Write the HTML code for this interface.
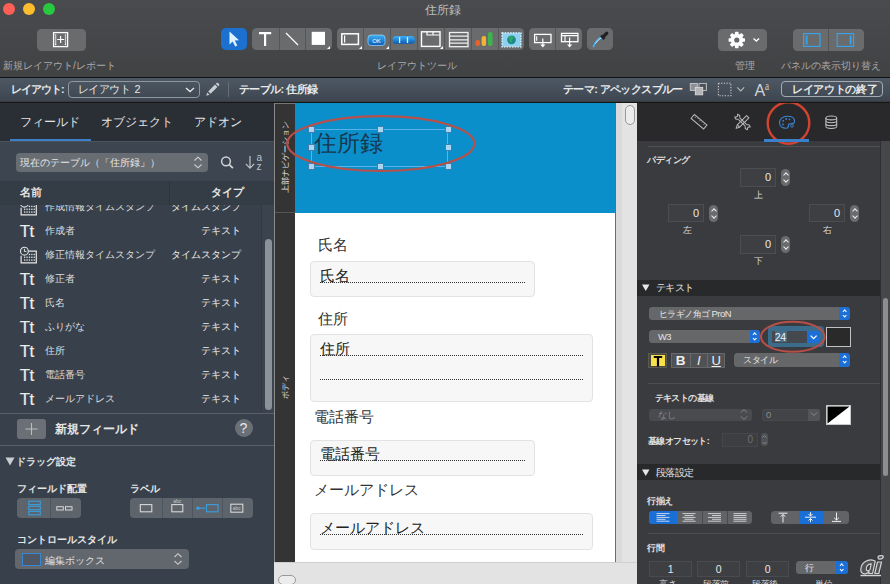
<!DOCTYPE html>
<html><head><meta charset="utf-8">
<style>
*{margin:0;padding:0;box-sizing:border-box}
html,body{width:890px;height:584px;overflow:hidden;background:#3a3b3d;font-family:"Liberation Sans",sans-serif;}
.a{position:absolute}
svg{overflow:visible}
#tb{left:0;top:0;width:890px;height:77px;background:linear-gradient(#494b4e,#404244)}
.title{left:-1.6px;width:890px;top:2px;text-align:center;color:#bdbdbd;font-size:12px}
.tl{width:12px;height:12px;border-radius:50%;top:3px}
.btn{background:#6a6b6d;border-radius:4.5px}
.lbl{color:#a9a9a9;font-size:10px;white-space:nowrap;line-height:12px}
.seg{border-left:1px solid #555658;width:0}
#lbar{left:0;top:78.3px;width:890px;height:23.2px;background:linear-gradient(#4e5864,#3d4650)}
.wt{color:#e8e8e8;font-size:10.8px;font-weight:bold;white-space:nowrap;line-height:13px}
.tab{color:#e4e4e4;font-size:11.8px;white-space:nowrap;line-height:14px}
.lt{white-space:nowrap;line-height:13px}
.lb{color:#e6e6e6;font-size:10.5px;font-weight:bold;white-space:nowrap;line-height:12px}
.row{left:0;width:260px;height:24px}
.tt{left:19.8px;top:3.8px;font-size:16.8px;font-weight:normal;color:#ececec;line-height:18px;letter-spacing:-0.6px;-webkit-text-stroke:.2px #ececec}
.nm{left:44.5px;top:6px;font-size:10px;color:#dedede;white-space:nowrap;line-height:12px}
.ty{right:19px;top:6px;font-size:10px;color:#ececec;white-space:nowrap;line-height:12px}
.grp{background:#5e646b;border-radius:4px}
.h{width:7px;height:7px;background:#a9d6f3;border:1px solid #3f7fae}
.fl{font-size:15.2px;line-height:18px;color:#333;white-space:nowrap}
.ft{font-size:15.2px;line-height:18px;color:#222;white-space:nowrap}
.fb{background:#f7f7f7;border:1px solid #e2e2e2;border-radius:4px}
.dl{height:1px;border-top:1px dotted #333}
.vl{height:12px;font-size:8.4px;line-height:12px;color:#e4e4e4;text-align:center;white-space:nowrap;transform:rotate(-90deg)}
.rb{color:#e2e2e2;font-size:8.8px;letter-spacing:-0.6px;font-weight:bold;white-space:nowrap;line-height:11px}
.rs{color:#d8d8d8;font-size:8.8px;letter-spacing:-0.3px;white-space:nowrap;line-height:11px}
.rt{color:#e6e6e6;font-size:9.4px;letter-spacing:-0.5px;white-space:nowrap;line-height:12px}
.inp{background:#3e3f42;border:1px solid #4c4d50;color:#e8e8e8;text-align:right;padding-right:4px;font-size:11px;line-height:17px}
.inp2{height:16px;background:#3e3f42;border:1px solid #4a4b4e;color:#e8e8e8;text-align:center;font-size:10.5px;line-height:14px}
.stp{width:9px;height:17px;background:#6a6b6d;border-radius:4.5px}
.stp::before{content:"";position:absolute;left:2.6px;top:4px;width:3px;height:3px;border-left:1px solid #eee;border-top:1px solid #eee;transform:rotate(45deg)}
.stp::after{content:"";position:absolute;left:2.6px;top:9px;width:3px;height:3px;border-right:1px solid #eee;border-bottom:1px solid #eee;transform:rotate(45deg)}
.sh{left:0;width:243px;background:#28292b;color:#e6e6e6;font-size:9.6px;letter-spacing:-0.4px;line-height:17px;white-space:nowrap;display:flex;align-items:center}
.dd{background:#666769;border-radius:3.5px}
.bl{background:#1b6fd6;border-radius:0 3.5px 3.5px 0}
.bl::before{content:"";position:absolute;left:3.7px;top:2.8px;width:2.4px;height:2.4px;border-left:1.1px solid #fff;border-top:1.1px solid #fff;transform:rotate(45deg)}
.bl::after{content:"";position:absolute;left:3.7px;top:6.8px;width:2.4px;height:2.4px;border-right:1.1px solid #fff;border-bottom:1.1px solid #fff;transform:rotate(45deg)}
</style></head><body>
<!-- toolbar -->
<div id="tb" class="a">
  <div class="a title">住所録</div>
  <div class="a tl" style="left:3px;background:#fe5f57"></div>
  <div class="a tl" style="left:23px;background:#febc2e"></div>
  <div class="a tl" style="left:43px;background:#28c840"></div>
  <div class="a btn" style="left:37px;top:29px;width:49px;height:22px"></div>
  <svg class="a" style="left:37px;top:29px" width="49" height="22" viewBox="0 0 49 22">
    <rect x="16.6" y="3.6" width="14" height="14" fill="none" stroke="#fff" stroke-width="1.3"/>
    <g fill="#fff"><circle cx="18.7" cy="5.9" r=".75"/><circle cx="18.7" cy="7.9" r=".75"/><circle cx="18.7" cy="9.9" r=".75"/><circle cx="18.7" cy="11.9" r=".75"/><circle cx="18.7" cy="13.9" r=".75"/><circle cx="18.7" cy="15.6" r=".75"/>
    <circle cx="28.5" cy="5.9" r=".75"/><circle cx="28.5" cy="7.9" r=".75"/><circle cx="28.5" cy="9.9" r=".75"/><circle cx="28.5" cy="11.9" r=".75"/><circle cx="28.5" cy="13.9" r=".75"/><circle cx="28.5" cy="15.6" r=".75"/></g>
    <path d="M20.2 10.5h7M23.6 7v7" stroke="#fff" stroke-width="1.2"/>
  </svg>
  <div class="a lbl" style="left:3px;top:60px">新規レイアウト/レポート</div>

  <div class="a" style="left:221px;top:28px;width:26px;height:22px;background:#1c70d0;border-radius:5px"></div>
  <svg class="a" style="left:221px;top:28px" width="26" height="22" viewBox="0 0 26 22">
    <path d="M8.5 3.4 L8.5 16.5 L11.6 13.6 L14.2 18.6 L16.3 17.6 L13.8 12.6 L18 12.3 Z" fill="#dff4ff"/>
  </svg>
  <div class="a btn" style="left:252px;top:28px;width:80px;height:22px"></div>
  <div class="a seg" style="left:279px;top:28px;height:22px"></div>
  <div class="a seg" style="left:305px;top:28px;height:22px"></div>
  <svg class="a" style="left:252px;top:28px" width="80" height="22" viewBox="0 0 80 22">
    <path d="M7 5.2h12.2M13.1 5.2v12.8" stroke="#fff" stroke-width="2.2" fill="none"/>
    <path d="M34 5 L46 17" stroke="#fff" stroke-width="1.3"/>
    <rect x="59.7" y="3.8" width="13.3" height="13.1" fill="#fff"/>
    <path d="M78 18 v3 h-3 z" fill="#fff"/>
  </svg>
  <div class="a btn" style="left:337px;top:28px;width:187px;height:22px"></div>
  <div class="a seg" style="left:363px;top:28px;height:22px"></div>
  <div class="a seg" style="left:390px;top:28px;height:22px"></div>
  <div class="a seg" style="left:417px;top:28px;height:22px"></div>
  <div class="a seg" style="left:444px;top:28px;height:22px"></div>
  <div class="a seg" style="left:471px;top:28px;height:22px"></div>
  <div class="a seg" style="left:498px;top:28px;height:22px"></div>
  <svg class="a" style="left:337px;top:28px" width="187" height="22" viewBox="0 0 187 22">
    <defs><linearGradient id="bg1" x1="0" y1="0" x2="0" y2="1"><stop offset="0" stop-color="#3db0f5"/><stop offset="1" stop-color="#0a5cb5"/></linearGradient></defs>
    <rect x="4.8" y="5.8" width="16.6" height="10.6" fill="none" stroke="#fff" stroke-width="1.5"/>
    <path d="M7.6 7.5v7" stroke="#fff" stroke-width="1.2"/>
    <path d="M25 18 v3 h-3 z" fill="#fff"/>
    <rect x="31" y="7" width="17" height="10.5" rx="3" fill="url(#bg1)" stroke="#9fd6ff" stroke-width=".7"/>
    <text x="39.5" y="14.6" font-size="6" fill="#fff" text-anchor="middle" font-family="Liberation Sans">OK</text>
    <path d="M52 18 v3 h-3 z" fill="#fff"/>
    <rect x="55.5" y="8" width="22.5" height="7.8" rx="3.9" fill="url(#bg1)"/>
    <path d="M62.6 9v6M70.5 9v6" stroke="#d8f0ff" stroke-width="1.3"/>
    <rect x="84.5" y="3.8" width="18.5" height="14.6" fill="none" stroke="#fff" stroke-width="1.4"/>
    <path d="M90 3.8v3.2h12.5M96 3.8v3.2" stroke="#fff" stroke-width="1.2" fill="none"/>
    <path d="M106 18 v3 h-3 z" fill="#fff"/>
    <rect x="112.5" y="4.5" width="18.5" height="14.2" fill="none" stroke="#f0f0f0" stroke-width="1.3"/>
    <path d="M112.5 8.2h18.5M112.5 11.8h18.5M112.5 15.2h18.5" stroke="#f0f0f0" stroke-width="1.2"/>
    <rect x="138.5" y="12" width="4.5" height="6" rx="2" fill="#e8622c"/>
    <rect x="144.6" y="8" width="4.5" height="10" rx="2" fill="#f2b233"/>
    <rect x="151" y="4" width="4.5" height="14" rx="2" fill="#3cb64a"/>
    <rect x="165" y="4.8" width="19" height="14" fill="#8fd0ee" stroke="#e6f6ff" stroke-width="1.2" stroke-dasharray="1.5 1.2"/>
    <circle cx="174.5" cy="11.8" r="4.4" fill="#1f8a8a"/>
    <path d="M172 9.5 q2 -1.5 3.5 0 q-0.5 2 -2.5 1.5 q0 2 2 3" stroke="#2fb060" stroke-width="1.5" fill="none"/>
  </svg>
  <div class="a btn" style="left:529px;top:28px;width:53px;height:22px"></div>
  <div class="a seg" style="left:555px;top:28px;height:22px"></div>
  <svg class="a" style="left:529px;top:28px" width="53" height="22" viewBox="0 0 53 22">
    <rect x="5.6" y="6.4" width="16.4" height="8.2" fill="none" stroke="#fff" stroke-width="1.3"/>
    <path d="M7.7 8.2v4.5" stroke="#fff" stroke-width="1.1"/>
    <path d="M13.8 10.5v7.2" stroke="#fff" stroke-width="1.2"/>
    <path d="M11.2 16.4h5.2l-2.6 3z" fill="#fff"/>
    <rect x="32.5" y="5.4" width="16.4" height="8.3" fill="none" stroke="#fff" stroke-width="1.3"/>
    <path d="M32.5 7.6h16.4M36 7.6v6" stroke="#fff" stroke-width="1.1"/>
    <path d="M40.6 9.5v8.2" stroke="#fff" stroke-width="1.2"/>
    <path d="M38 16.4h5.2l-2.6 3z" fill="#fff"/>
  </svg>
  <div class="a btn" style="left:587px;top:28px;width:26px;height:22px"></div>
  <svg class="a" style="left:587px;top:28px" width="26" height="22" viewBox="0 0 26 22">
    <path d="M6.5 18.5 Q9 12 15.5 8.3" stroke="#4ab2ea" stroke-width="1.8" fill="none" stroke-linecap="round"/>
    <path d="M8.5 15.5 Q11 11.5 15 9.5" stroke="#d0ecff" stroke-width=".8" fill="none"/>
    <path d="M14 7.5 L17.5 11" stroke="#222" stroke-width="2.6"/>
    <path d="M16.5 8.5 L19.8 5.2" stroke="#222" stroke-width="3.2" stroke-linecap="round"/>
  </svg>
  <div class="a lbl" style="left:377px;top:60px">レイアウトツール</div>

  <div class="a btn" style="left:718px;top:29px;width:49px;height:22px"></div>
  <svg class="a" style="left:718px;top:29px" width="49" height="22" viewBox="0 0 49 22">
    <g transform="translate(18.8 11)" fill="#fff">
      <circle r="6.2"/>
      <g id="teeth"><rect x="-1.8" y="-8.2" width="3.6" height="4" rx=".6"/></g>
      <use href="#teeth" transform="rotate(45)"/><use href="#teeth" transform="rotate(90)"/><use href="#teeth" transform="rotate(135)"/>
      <use href="#teeth" transform="rotate(180)"/><use href="#teeth" transform="rotate(225)"/><use href="#teeth" transform="rotate(270)"/><use href="#teeth" transform="rotate(315)"/>
      <circle r="2.6" fill="#676869"/>
    </g>
    <path d="M35.5 9.4 l2.8 2.6 l2.8 -2.6" stroke="#fff" stroke-width="1.4" fill="none"/>
  </svg>
  <div class="a btn" style="left:793px;top:29px;width:71px;height:22px"></div>
  <div class="a seg" style="left:828px;top:29px;height:22px;border-color:#545557"></div>
  <svg class="a" style="left:793px;top:29px" width="71" height="22" viewBox="0 0 71 22">
    <rect x="10.6" y="4.6" width="16.4" height="12.8" fill="none" stroke="#3aa3e6" stroke-width="1.2"/>
    <rect x="12.6" y="6.5" width="2" height="9" fill="#3aa3e6"/>
    <rect x="44.2" y="4.6" width="16.4" height="12.8" fill="none" stroke="#3aa3e6" stroke-width="1.2"/>
    <rect x="56.6" y="6.5" width="2" height="9" fill="#3aa3e6"/>
  </svg>
  <div class="a lbl" style="left:735px;top:60px">管理</div>
  <div class="a lbl" style="left:781px;top:60px">パネルの表示切り替え</div>
</div>
<div class="a" style="left:0;top:77px;width:890px;height:1.4px;background:#111214"></div>
<div id="lbar" class="a">
  <div class="a wt" style="left:11px;top:5px;letter-spacing:-1px">レイアウト:</div>
  <div class="a" style="left:68px;top:3px;width:132px;height:17px;border:1px solid #8f979f;border-radius:4px"></div>
  <div class="a wt" style="left:78px;top:5px;font-weight:normal;letter-spacing:-0.6px;word-spacing:2px">レイアウト 2</div>
  <svg class="a" style="left:185px;top:9px" width="10" height="6"><path d="M1 1l4 3.6 4-3.6" stroke="#e8e8e8" stroke-width="1.3" fill="none"/></svg>
  <svg class="a" style="left:204px;top:4px" width="16" height="16" viewBox="0 0 16 16">
    <path d="M2.3 13.7 l0.9 -3.3 l2.4 2.4 z M4.2 9.4 l6.8 -6.8 l2.4 2.4 l-6.8 6.8 z M11.8 1.8 l0.9 -0.9 q0.6 -0.5 1.2 0 l1.2 1.2 q0.5 0.6 0 1.2 l-0.9 0.9 z" fill="#c9ced3"/>
  </svg>
  <div class="a" style="left:228px;top:4px;width:1px;height:15px;background:#67707a"></div>
  <div class="a wt" style="left:238.5px;top:5px;letter-spacing:-0.5px">テーブル: 住所録</div>
  <div class="a wt" style="left:563px;top:5px;letter-spacing:-0.6px">テーマ: アペックスブルー</div>
  <svg class="a" style="left:685px;top:1px" width="90" height="20" viewBox="685 80 90 20">
    <rect x="690.3" y="84.4" width="7" height="7" fill="#8d9196" stroke="#c8c8c8" stroke-width=".9"/>
    <rect x="699" y="84.4" width="7.4" height="7" fill="#4d535a" stroke="#c8c8c8" stroke-width=".9"/>
    <rect x="695.3" y="88.4" width="7.4" height="7.4" fill="#b3b5b7" stroke="#d8d8d8" stroke-width=".9"/>
    <rect x="718.4" y="84.3" width="12.5" height="12.4" fill="none" stroke="#d0d0d0" stroke-width="1.1" stroke-dasharray="1.2 1.5"/>
    <path d="M737.2 88.4l3.5 3.5 3.5-3.5" stroke="#b8b8b8" stroke-width="1.1" fill="none"/>
    <text x="754.5" y="96.8" font-size="16" fill="#d0d3d6" font-family="Liberation Sans">A</text>
    <text x="765" y="90.8" font-size="11.5" fill="#d0d3d6" font-family="Liberation Serif" transform="translate(765 0) scale(.8 1) translate(-765 0)">a</text>
  </svg>
  <div class="a" style="left:781px;top:3px;width:102px;height:16px;border:1px solid #a5abb1;border-radius:4px"></div>
  <div class="a wt" style="left:792px;top:5px;letter-spacing:-0.35px">レイアウトの終了</div>
</div>
<div class="a" style="left:0;top:101.5px;width:890px;height:1.5px;background:#151618"></div>
<!-- left panel -->
<div class="a" style="left:0;top:103px;width:274px;height:481px;background:#38414b;overflow:hidden">
  <div class="a" style="left:0;top:0;width:274px;height:38px;background:#2a2f36"></div>
  <div class="a tab" style="left:20px;top:12px">フィールド</div>
  <div class="a tab" style="left:101px;top:12px">オブジェクト</div>
  <div class="a tab" style="left:194px;top:12px">アドオン</div>
  <div class="a" style="left:10px;top:36px;width:81px;height:2px;background:#3b80c9"></div>
  <div class="a" style="left:0;top:38px;width:274px;height:40px;background:#3c4550;border-top:1px solid #4b535c"></div>
  <div class="a" style="left:16px;top:49.5px;width:192px;height:19.5px;background:#686d73;border-radius:4px"></div>
  <div class="a lt" style="left:20px;top:53px;font-size:10px;color:#e6e6e6">現在のテーブル（「住所録」）</div>
  <svg class="a" style="left:193px;top:53px" width="10" height="13" viewBox="0 0 10 13"><path d="M1.5 4.5l3.5-3.3 3.5 3.3M1.5 8.5l3.5 3.3 3.5-3.3" stroke="#cfd2d5" stroke-width="1.1" fill="none"/></svg>
  <svg class="a" style="left:220px;top:52px" width="15" height="15" viewBox="0 0 15 15"><circle cx="6" cy="6.3" r="4.4" stroke="#d0d3d6" stroke-width="1.5" fill="none"/><path d="M9.3 9.6l3.6 3.6" stroke="#d0d3d6" stroke-width="1.8"/></svg>
  <svg class="a" style="left:244px;top:49px" width="22" height="20" viewBox="0 0 22 20">
    <path d="M6 4v12M1.8 11.8l4.2 4.4 4.2-4.4" stroke="#bfc3c7" stroke-width="1.2" fill="none"/>
    <text x="12.5" y="8.5" font-size="10" fill="#bfc3c7" font-family="Liberation Sans">a</text>
    <text x="12.5" y="18" font-size="10" fill="#bfc3c7" font-family="Liberation Sans">z</text>
  </svg>
  <div class="a" style="left:0;top:78px;width:274px;height:24px;background:#343c45"></div>
  <div class="a" style="left:169px;top:78px;width:1px;height:24px;background:#2f343a"></div>
  <div class="a lb" style="left:20px;top:83px">名前</div>
  <div class="a lb" style="left:211px;top:83px">タイプ</div>

  <!-- rows -->
  <div class="a" style="left:0;top:102px;width:260px;height:208px;overflow:hidden">
    <div class="a row" style="top:-10px"><svg class="a" style="left:20px;top:0px" width="18" height="22" viewBox="0 0 18 22"><path d="M6.5 8.2h9.8v11.6h-15.2v-7" fill="none" stroke="#e6e6e6" stroke-width="1.2"/><circle cx="4.4" cy="8.2" r="3.9" fill="#38414b" stroke="#e6e6e6" stroke-width="1.1"/><path d="M4.4 5.8v2.6h2" stroke="#e6e6e6" stroke-width="1" fill="none"/><g fill="#e6e6e6"><rect x="4" y="13.6" width="1.3" height="1.3"/><rect x="6.4" y="13.6" width="1.3" height="1.3"/><rect x="8.8" y="13.6" width="1.3" height="1.3"/><rect x="11.2" y="13.6" width="1.3" height="1.3"/><rect x="13.6" y="13.6" width="1.3" height="1.3"/><rect x="4" y="16.4" width="1.3" height="1.3"/><rect x="6.4" y="16.4" width="1.3" height="1.3"/><rect x="8.8" y="16.4" width="1.3" height="1.3"/><rect x="11.2" y="16.4" width="1.3" height="1.3"/><rect x="13.6" y="16.4" width="1.3" height="1.3"/><rect x="8.8" y="10.8" width="1.3" height="1.3"/><rect x="11.2" y="10.8" width="1.3" height="1.3"/><rect x="13.6" y="10.8" width="1.3" height="1.3"/></g></svg><span class="a nm">作成情報タイムスタンプ</span><span class="a ty">タイムスタンプ</span></div>
    <div class="a row" style="top:14px"><span class="a tt">Tt</span><span class="a nm">作成者</span><span class="a ty">テキスト</span></div>
    <div class="a row" style="top:38px"><svg class="a" style="left:20px;top:0px" width="18" height="22" viewBox="0 0 18 22"><path d="M6.5 8.2h9.8v11.6h-15.2v-7" fill="none" stroke="#e6e6e6" stroke-width="1.2"/><circle cx="4.4" cy="8.2" r="3.9" fill="#38414b" stroke="#e6e6e6" stroke-width="1.1"/><path d="M4.4 5.8v2.6h2" stroke="#e6e6e6" stroke-width="1" fill="none"/><g fill="#e6e6e6"><rect x="4" y="13.6" width="1.3" height="1.3"/><rect x="6.4" y="13.6" width="1.3" height="1.3"/><rect x="8.8" y="13.6" width="1.3" height="1.3"/><rect x="11.2" y="13.6" width="1.3" height="1.3"/><rect x="13.6" y="13.6" width="1.3" height="1.3"/><rect x="4" y="16.4" width="1.3" height="1.3"/><rect x="6.4" y="16.4" width="1.3" height="1.3"/><rect x="8.8" y="16.4" width="1.3" height="1.3"/><rect x="11.2" y="16.4" width="1.3" height="1.3"/><rect x="13.6" y="16.4" width="1.3" height="1.3"/><rect x="8.8" y="10.8" width="1.3" height="1.3"/><rect x="11.2" y="10.8" width="1.3" height="1.3"/><rect x="13.6" y="10.8" width="1.3" height="1.3"/></g></svg><span class="a nm">修正情報タイムスタンプ</span><span class="a ty">タイムスタンプ</span></div>
    <div class="a row" style="top:62px"><span class="a tt">Tt</span><span class="a nm">修正者</span><span class="a ty">テキスト</span></div>
    <div class="a row" style="top:86px"><span class="a tt">Tt</span><span class="a nm">氏名</span><span class="a ty">テキスト</span></div>
    <div class="a row" style="top:110px"><span class="a tt">Tt</span><span class="a nm">ふりがな</span><span class="a ty">テキスト</span></div>
    <div class="a row" style="top:134px"><span class="a tt">Tt</span><span class="a nm">住所</span><span class="a ty">テキスト</span></div>
    <div class="a row" style="top:158px"><span class="a tt">Tt</span><span class="a nm">電話番号</span><span class="a ty">テキスト</span></div>
    <div class="a row" style="top:182px"><span class="a tt">Tt</span><span class="a nm">メールアドレス</span><span class="a ty">テキスト</span></div>
  </div>
  <!-- scrollbar -->
  <div class="a" style="left:261px;top:102px;width:13px;height:208px;background:#3b444e;border-left:1px solid #333a42"></div>
  <div class="a" style="left:265px;top:135.5px;width:7px;height:171px;background:#8c9299;border-radius:4px"></div>

  <div class="a" style="left:0;top:310px;width:274px;height:1px;background:#596068"></div>
  <div class="a" style="left:17px;top:316px;width:29px;height:19.5px;background:#6b7077;border-radius:3px"></div>
  <svg class="a" style="left:17px;top:316px" width="29" height="20" viewBox="0 0 29 20"><path d="M8.5 10h12M14.5 4v12" stroke="#b9bdc1" stroke-width="1.1"/></svg>
  <div class="a lb" style="left:55px;top:318.5px;font-size:11.9px;line-height:14px">新規フィールド</div>
  <div class="a" style="left:234.5px;top:316px;width:18px;height:18px;border-radius:50%;background:#6b7077;color:#e8e8e8;font-size:14px;line-height:18px;text-align:center">?</div>
  <div class="a" style="left:0;top:342px;width:274px;height:1px;background:#596068"></div>

  <div class="a lb" style="left:5px;top:352px;font-size:10.2px;line-height:13px"><svg width="11" height="10" style="vertical-align:-1px;margin-right:0px"><path d="M0.5 1.5h9l-4.5 8z" fill="#c9ccd0"/></svg>ドラッグ設定</div>
  <div class="a lb" style="left:17px;top:380px;font-size:10px">フィールド配置</div>
  <div class="a lb" style="left:130px;top:380px;font-size:10px">ラベル</div>
  <div class="a grp" style="left:17px;top:395px;width:63.5px;height:20px"></div>
  <div class="a" style="left:49.5px;top:395px;width:1px;height:20px;background:#4f555c"></div>
  <svg class="a" style="left:17px;top:395px" width="64" height="20" viewBox="0 0 64 20">
    <rect x="11.8" y="3.2" width="11.5" height="3.4" fill="none" stroke="#3a9ee0" stroke-width="1.1"/>
    <rect x="11.8" y="8.3" width="11.5" height="3.4" fill="none" stroke="#3a9ee0" stroke-width="1.1"/>
    <rect x="11.8" y="13.4" width="11.5" height="3.4" fill="none" stroke="#3a9ee0" stroke-width="1.1"/>
    <rect x="39.8" y="11.2" width="6.5" height="3.3" fill="none" stroke="#d6d8da" stroke-width="1" transform="translate(0 -2.5)"/>
    <rect x="48.5" y="11.2" width="6.5" height="3.3" fill="none" stroke="#d6d8da" stroke-width="1" transform="translate(0 -2.5)"/>
  </svg>
  <div class="a grp" style="left:130px;top:395px;width:123px;height:20px"></div>
  <div class="a" style="left:161.5px;top:395px;width:1px;height:20px;background:#4f555c"></div>
  <div class="a" style="left:191.5px;top:395px;width:1px;height:20px;background:#4f555c"></div>
  <div class="a" style="left:221.5px;top:395px;width:1px;height:20px;background:#4f555c"></div>
  <svg class="a" style="left:130px;top:395px" width="123" height="20" viewBox="0 0 123 20">
    <rect x="10.3" y="6.6" width="11.5" height="7.2" fill="none" stroke="#d6d8da" stroke-width="1.1"/>
    <rect x="41.8" y="6.6" width="11" height="7.2" fill="none" stroke="#d6d8da" stroke-width="1.1"/>
    <text x="47.3" y="5" font-size="5" fill="#c5c8cb" text-anchor="middle" font-family="Liberation Sans">abc</text>
    <path d="M66 10.2h9" stroke="#3a9ee0" stroke-width="1.1"/><circle cx="68" cy="10.2" r="1.6" fill="#3a9ee0"/>
    <rect x="76.5" y="6.6" width="11.5" height="7.2" fill="none" stroke="#3a9ee0" stroke-width="1.1"/>
    <rect x="100.8" y="6.2" width="12" height="8" fill="none" stroke="#d6d8da" stroke-width="1.1"/>
    <text x="106.8" y="12.3" font-size="5" fill="#c5c8cb" text-anchor="middle" font-family="Liberation Sans">abc</text>
  </svg>
  <div class="a lb" style="left:17px;top:431px;font-size:10px">コントロールスタイル</div>
  <div class="a" style="left:15px;top:446px;width:174px;height:20px;background:#62676e;border-radius:4px"></div>
  <div class="a" style="left:22px;top:449.5px;width:18.5px;height:13px;border:1.5px solid #3a86d0;background:#4f5864"></div>
  <div class="a lt" style="left:45px;top:451px;font-size:10.1px;color:#e0e0e0">編集ボックス</div>
  <svg class="a" style="left:173px;top:449px" width="10" height="14" viewBox="0 0 10 14"><path d="M1.5 5l3.5-3.3 3.5 3.3M1.5 9l3.5 3.3 3.5-3.3" stroke="#c8cbce" stroke-width="1.1" fill="none"/></svg>
</div>
<div class="a" style="left:274px;top:560px;width:1px;height:24px;background:#ddd"></div>
<!-- layout area -->
<div class="a" style="left:274px;top:103px;width:363px;height:481px;background:#e3e3e3;overflow:hidden">
  <div class="a" style="left:0;top:0;width:1px;height:459px;background:#8a8a8a"></div>
  <div class="a" style="left:1px;top:0;width:20px;height:459px;background:#353434"></div>
  <div class="a" style="left:1px;top:0;width:20px;height:1px;background:#777"></div>
  <div class="a" style="left:1px;top:109px;width:20px;height:1px;background:#555"></div>
  <div class="a vl" style="left:-27px;top:48px;width:76px">上部ナビゲーション</div>
  <div class="a vl" style="left:-27px;top:278px;width:76px">ボディ</div>
  <div class="a" style="left:21px;top:0;width:321px;height:110px;background:#0b8fcb"></div>
  <div class="a" style="left:21px;top:110px;width:321px;height:349px;background:#fff"></div>
  <div class="a" style="left:341px;top:0;width:1px;height:459px;background:#6b6b6b"></div>
  <div class="a" style="left:342px;top:0;width:6px;height:459px;background:#dadada"></div>
  <div class="a" style="left:351px;top:2px;width:9.5px;height:19.5px;border:1px solid #999;border-radius:5px;background:#ececec"></div>
  <div class="a" style="left:1px;top:459px;width:362px;height:22px;background:#e3e3e3;border-top:1px solid #d0d0d0"></div>
  <div class="a" style="left:3.5px;top:472px;width:18.5px;height:9.5px;border:1px solid #999;border-radius:5px;background:#ececec"></div>

  <!-- header object -->
  <div class="a" style="left:37px;top:26px;width:137px;height:37.6px;border:1px solid #5cb2e6"></div>
  <div class="a" style="left:39.5px;top:25px;font-size:23.2px;line-height:30px;color:#17384f;white-space:nowrap">住所録</div>
  <div class="a h" style="left:33.5px;top:22.5px"></div>
  <div class="a h" style="left:102.5px;top:22.5px"></div>
  <div class="a h" style="left:170.5px;top:22.5px"></div>
  <div class="a h" style="left:33.5px;top:41.3px"></div>
  <div class="a h" style="left:170.5px;top:41.3px"></div>
  <div class="a h" style="left:33.5px;top:60px"></div>
  <div class="a h" style="left:102.5px;top:60px"></div>
  <div class="a h" style="left:170.5px;top:60px"></div>
  <svg class="a" style="left:0;top:0" width="363" height="110"><ellipse cx="106.8" cy="40.6" rx="93.6" ry="27.4" fill="none" stroke="#b8504a" stroke-width="2.2"/></svg>

  <!-- body -->
  <div class="a fl" style="left:43.5px;top:133px">氏名</div>
  <div class="a fb" style="left:36.4px;top:158.3px;width:224.2px;height:36px"></div>
  <div class="a ft" style="left:46px;top:164px">氏名</div>
  <div class="a dl" style="left:46px;top:179px;width:205px"></div>

  <div class="a fl" style="left:43.5px;top:207px">住所</div>
  <div class="a fb" style="left:36.4px;top:231px;width:282.6px;height:67.7px"></div>
  <div class="a ft" style="left:46px;top:237px">住所</div>
  <div class="a dl" style="left:46px;top:252px;width:263px"></div>
  <div class="a dl" style="left:46px;top:275.7px;width:263px"></div>

  <div class="a fl" style="left:39.6px;top:305px">電話番号</div>
  <div class="a fb" style="left:36.4px;top:336.5px;width:224.2px;height:36.2px"></div>
  <div class="a ft" style="left:46px;top:342px">電話番号</div>
  <div class="a dl" style="left:46px;top:357px;width:205px"></div>

  <div class="a fl" style="left:39.6px;top:378px">メールアドレス</div>
  <div class="a fb" style="left:36.4px;top:410px;width:282.6px;height:36.7px"></div>
  <div class="a ft" style="left:46px;top:416px">メールアドレス</div>
  <div class="a dl" style="left:46px;top:431px;width:263px"></div>
</div>
<!-- right panel -->
<div class="a" style="left:637px;top:103px;width:253px;height:481px;background:#3a3b3e;overflow:hidden">
  <div class="a" style="left:0;top:0;width:253px;height:38px;background:#29292b"></div>
  <svg class="a" style="left:0;top:0" width="253" height="38" viewBox="0 0 253 38">
    <g transform="translate(62 18.7) rotate(40)"><rect x="-8.2" y="-2.6" width="16.4" height="5.2" fill="none" stroke="#b9b9b9" stroke-width="1"/><path d="M-5.5 -2.6v2.2M-2.75 -2.6v1.3M0 -2.6v2.2M2.75 -2.6v1.3M5.5 -2.6v2.2" stroke="#b9b9b9" stroke-width=".7"/></g>
    <g transform="translate(105.5 19) scale(.82) rotate(-45)" fill="none" stroke="#b8b8b8" stroke-width="1.25" stroke-linejoin="round">
      <path d="M-11 0 L-7 -2 H9 V2 H-7 Z"/><path d="M-7 -2 V2"/>
    </g>
    <g transform="translate(105.5 19) scale(.82) rotate(45)" fill="none" stroke="#b8b8b8" stroke-width="1.25" stroke-linejoin="round">
      <path d="M-6 -1.3 H6 M-6 1.3 H6"/>
      <path d="M-6 -1.3 L-8 -3.2 L-11 -2.5 L-9.5 -0.8 V0.8 L-11 2.5 L-8 3.2 L-6 1.3"/>
      <path d="M6 -1.3 L8 -3.2 L11 -2.5 L9.5 -0.8 V0.8 L11 2.5 L8 3.2 L6 1.3"/>
    </g>
    <g transform="translate(150 19)">
      <path d="M0.5 -5.8 C-4.5 -5.8 -7.5 -2.8 -7.5 0.6 C-7.5 4.2 -4.5 6.2 -1 6.2 C1.2 6.2 1.5 4.8 1.4 3.6 C1.2 2.2 2.5 1.5 3.8 1.8 C6.2 2.4 7.6 0.8 7.6 -1 C7.6 -3.8 4.8 -5.8 0.5 -5.8 Z" fill="none" stroke="#3b85cf" stroke-width="1.15"/>
      <circle cx="-3.8" cy="-1.2" r=".9" fill="#3b85cf"/><circle cx="-0.8" cy="-3" r=".9" fill="#3b85cf"/><circle cx="-4" cy="2.4" r=".9" fill="#3b85cf"/><circle cx="2.5" cy="-2.6" r=".8" fill="#3b85cf"/><circle cx="5" cy="3.8" r="1.4" fill="none" stroke="#3b85cf" stroke-width=".9"/>
    </g>
    <g transform="translate(194.3 19.2) scale(.9)" fill="none" stroke="#c0c0c0" stroke-width="1.15">
      <ellipse cx="0" cy="-4.8" rx="6" ry="2.2"/>
      <path d="M-6 -4.8v9.6M6 -4.8v9.6"/>
      <path d="M-6 -1.6a6 2.2 0 0 0 12 0M-6 1.6a6 2.2 0 0 0 12 0M-6 4.8a6 2.2 0 0 0 12 0"/>
    </g>
    <circle cx="151.5" cy="20" r="20.8" fill="none" stroke="#d2442f" stroke-width="2.4"/>
  </svg>
  <div class="a" style="left:127px;top:36px;width:45px;height:2.5px;background:#3a80cc"></div>

  <div class="a" style="left:243px;top:38px;width:10px;height:443px;background:#46474a;border-left:1px solid #2e2f31"></div>
  <div class="a" style="left:246px;top:195px;width:5px;height:178px;background:#8d8e90;border-radius:3px"></div>

  <div class="a" style="left:11px;top:42.6px;width:232px;height:1px;background:#505154"></div>
  <div class="a rb" style="left:10.4px;top:52px">パディング</div>
  <!-- padding inputs -->
  <div class="a inp" style="left:103px;top:65px;width:36px;height:19px">0</div>
  <div class="a stp" style="left:144px;top:66px"></div>
  <div class="a rs" style="left:117px;top:87px">上</div>
  <div class="a inp" style="left:31px;top:100.5px;width:36px;height:18.5px">0</div>
  <div class="a stp" style="left:72.4px;top:101.5px"></div>
  <div class="a rs" style="left:46px;top:122px">左</div>
  <div class="a inp" style="left:172px;top:100.5px;width:36px;height:18.5px">0</div>
  <div class="a stp" style="left:213px;top:101.5px"></div>
  <div class="a rs" style="left:186px;top:122px">右</div>
  <div class="a inp" style="left:103px;top:132px;width:36px;height:18.5px">0</div>
  <div class="a stp" style="left:144px;top:133px"></div>
  <div class="a rs" style="left:117px;top:153px">下</div>

  <div class="a sh" style="top:177px;height:15.6px"><svg width="8" height="7" style="margin:0 6px 0 4.5px"><path d="M0 0.5h7.5l-3.75 6.5z" fill="#e6e6e6"/></svg>テキスト</div>

  <!-- text section -->
  <div class="a dd" style="left:12.3px;top:204px;width:201px;height:12.7px"></div>
  <div class="a bl" style="left:201.9px;top:204px;width:11.4px;height:12.7px"></div>
  <div class="a rt" style="left:21.5px;top:204.5px">ヒラギノ角ゴ ProN</div>

  <div class="a dd" style="left:12.3px;top:227px;width:111px;height:13px"></div>
  <div class="a bl" style="left:112.5px;top:227px;width:10.8px;height:13px"></div>
  <div class="a rt" style="left:21px;top:227.5px">W3</div>

  <div class="a" style="left:131px;top:223.2px;width:56px;height:21.3px;background:#3c6c8c;border-radius:4px"></div>
  <div class="a" style="left:135.4px;top:227.7px;width:34.2px;height:12.3px;background:#45484c"></div>
  <div class="a" style="left:137.6px;top:228.2px;width:12.4px;height:10.8px;background:#4a6a86"></div>
  <div class="a rt" style="left:137.8px;top:227.5px;font-size:10.5px;color:#f2f2f2">24</div>
  <div class="a" style="left:169.6px;top:227.7px;width:13.4px;height:12.3px;border-radius:0 3px 3px 0;background:#1b6fd6"></div><svg class="a" style="left:170px;top:227.7px" width="13" height="13"><path d="M3.6 4.6l3 3 3-3" stroke="#fff" stroke-width="1.3" fill="none"/></svg>
  <svg class="a" style="left:0;top:0" width="253" height="260"><ellipse cx="155.8" cy="233.8" rx="31.8" ry="15" fill="none" stroke="#b74f48" stroke-width="2"/></svg>
  <div class="a" style="left:188.7px;top:224px;width:25.3px;height:20px;border:1.5px solid #c2c2c2;background:#2a2a2a"></div>

  <div class="a" style="left:11px;top:249.8px;width:19px;height:15px;background:#484a3e;border:1px solid #5a5b50"></div>
  <div class="a" style="left:13.5px;top:252px;width:14.5px;height:11px;background:#f7e04a"></div><svg class="a" style="left:0;top:0" width="40" height="270"><path d="M16.8 254h8.4" stroke="#000" stroke-width="1.9"/><path d="M21 254v9.5" stroke="#000" stroke-width="2.2"/></svg>
  <div class="a" style="left:34px;top:249.8px;width:54px;height:15px;border:1px solid #66676a;background:#505154"></div>
  <div class="a" style="left:53px;top:249.8px;width:1px;height:15px;background:#6a6b6e"></div>
  <div class="a" style="left:70.4px;top:249.8px;width:1px;height:15px;background:#6a6b6e"></div>
  <div class="a" style="left:34px;top:249.5px;width:19px;text-align:center;color:#eee;font-weight:bold;font-size:13.5px;line-height:15px">B</div>
  <div class="a" style="left:53px;top:249.5px;width:17.4px;text-align:center;color:#eee;font-style:italic;font-size:13px;line-height:15px">I</div>
  <div class="a" style="left:70.4px;top:249.5px;width:17.6px;text-align:center;color:#eee;text-decoration:underline;font-size:13px;line-height:15px">U</div>
  <div class="a dd" style="left:97px;top:250.4px;width:116px;height:13.2px"></div>
  <div class="a bl" style="left:202px;top:250.4px;width:11.3px;height:13.2px"></div>
  <div class="a rt" style="left:106px;top:251px">スタイル</div>

  <div class="a" style="left:11.4px;top:280px;width:232px;height:1px;background:#4d4e51"></div>
  <div class="a rb" style="left:17.6px;top:289.5px">テキストの基線</div>
  <div class="a" style="left:12.3px;top:305.7px;width:102.5px;height:12px;background:#4a4b4e;border-radius:3px"></div>
  <div class="a rt" style="left:21px;top:305.5px;color:#8a8b8d">なし</div>
  <svg class="a" style="left:103px;top:305px" width="8" height="13"><path d="M1 4.5l3-3 3 3M1 8.5l3 3 3-3" stroke="#8a8b8d" stroke-width="1" fill="none"/></svg>
  <div class="a" style="left:125.2px;top:305.7px;width:57.6px;height:12.3px;background:#434447;border:1px solid #48494c;border-radius:2px"></div>
  <div class="a" style="left:170.7px;top:305.7px;width:12.1px;height:12.3px;background:#535457;border-radius:0 3px 3px 0"></div>
  <div class="a rt" style="left:129px;top:305.5px;color:#8a8b8d">0</div>
  <svg class="a" style="left:172px;top:307px" width="10" height="8"><path d="M2 2.5l3 3 3-3" stroke="#8a8b8d" stroke-width="1" fill="none"/></svg>
  <svg class="a" style="left:189px;top:302px" width="25" height="20"><rect x=".5" y=".5" width="24" height="19" fill="#fff" stroke="#c8c8c8"/><path d="M1.5 1.5h22L1.5 18.5z" fill="#000"/></svg>
  <div class="a rb" style="left:11px;top:333px">基線オフセット:</div>
  <div class="a" style="left:85px;top:329.6px;width:36px;height:14px;background:#3d3e41;border:1px solid #46474a;color:#6f7072;text-align:right;padding-right:4px;font-size:10px;line-height:12px">0</div>
  <div class="a" style="left:124.3px;top:329.8px;width:6.5px;height:13.5px;background:#505154;border-radius:3px"></div><svg class="a" style="left:124.3px;top:329.8px" width="7" height="14"><path d="M1.5 4.5l2-2 2 2M1.5 9l2 2 2-2" stroke="#8a8b8d" stroke-width=".9" fill="none"/></svg>

  <div class="a sh" style="top:361.3px;height:15.7px"><svg width="8" height="7" style="margin:0 6px 0 4.5px"><path d="M0 0.5h7.5l-3.75 6.5z" fill="#e6e6e6"/></svg>段落設定</div>

  <div class="a rb" style="left:10.4px;top:393px">行揃え</div>
  <div class="a" style="left:11.8px;top:408.4px;width:102.8px;height:12.3px;background:#626366;border-radius:3.5px;overflow:hidden">
    <div class="a" style="left:0;top:0;width:28.6px;height:12.3px;background:#1a6fd6"></div>
    <div class="a" style="left:52.9px;top:0;width:1px;height:12.3px;background:#4a4b4e"></div>
    <div class="a" style="left:78px;top:0;width:1px;height:12.3px;background:#4a4b4e"></div>
  </div>
  <svg class="a" style="left:11.8px;top:408.4px" width="103" height="13" viewBox="0 0 103 13">
    <g stroke="#f0f0f0" stroke-width=".8"><path d="M7.5 2.6h13M7.5 4.5h9M7.5 6.4h13M7.5 8.3h9M7.5 10.2h13"/></g>
    <g stroke="#e8e8e8" stroke-width=".8"><path d="M33.5 2.6h13M35.5 4.5h9M33.5 6.4h13M35.5 8.3h9M33.5 10.2h13"/>
    <path d="M59 2.6h13M63 4.5h9M59 6.4h13M63 8.3h9M59 10.2h13"/>
    <path d="M84.5 2.6h13M84.5 4.5h13M84.5 6.4h13M84.5 8.3h13M84.5 10.2h13"/></g>
  </svg>
  <div class="a" style="left:134px;top:408.4px;width:77.6px;height:12.3px;background:#626366;border-radius:3.5px;overflow:hidden">
    <div class="a" style="left:27.7px;top:0;width:25.3px;height:12.3px;background:#1a6fd6"></div>
  </div>
  <svg class="a" style="left:134px;top:408.4px" width="78" height="13" viewBox="0 0 78 13">
    <g stroke="#f0f0f0" stroke-width="1" fill="none">
      <path d="M7.5 2.2h9M12 4v7.5"/><path d="M9.6 5.6l2.4-2.2 2.4 2.2"/>
      <path d="M34 6.2h11M39.5 1.2v3.6M37.5 3l2 2 2-2M39.5 7.6v3.6M37.5 9.5l2-2 2 2"/>
      <path d="M61 10.4h9M65.5 1.5v7.5M63.1 6.8l2.4 2.2 2.4-2.2"/>
    </g>
  </svg>

  <div class="a" style="left:11px;top:430.4px;width:232px;height:1px;background:#4d4e51"></div>
  <div class="a rb" style="left:10.4px;top:440px">行間</div>
  <div class="a inp2" style="left:11.8px;top:457.8px;width:43.5px">1</div>
  <div class="a inp2" style="left:59.8px;top:457.8px;width:43.5px">0</div>
  <div class="a inp2" style="left:109px;top:457.8px;width:43.3px">0</div>
  <div class="a dd" style="left:159px;top:458px;width:52px;height:13px"></div>
  <div class="a bl" style="left:199px;top:458px;width:12px;height:13px"></div>
  <div class="a rt" style="left:168px;top:458.5px">行</div>
  <div class="a rs" style="left:22px;top:475.5px">高さ</div>
  <div class="a rs" style="left:66px;top:475.5px">段落前</div>
  <div class="a rs" style="left:115px;top:475.5px">段落後</div>
  <div class="a rs" style="left:178px;top:475.5px">単位</div>
</div>
<svg class="a" style="left:858px;top:553px" width="30" height="26" viewBox="0 0 30 26">
  <g fill="#505255" stroke="#d4d4d4" stroke-width="1.2" stroke-linejoin="round">
    <path d="M16 7.5 C10 5.5 3.5 9.5 2.8 16 C2.4 19.5 4.8 21.3 7.5 20.8 C9 20.5 10.2 19.5 11 18.3 L10.8 20.5 L14.6 20.5 L17.2 8.2 Z M12 16.5 C10.8 18 8.8 18.3 8.3 16.5 C7.8 14 9.8 10.5 13.2 10.8 Z"/>
    <path d="M19.5 9 L23.5 9 L20.8 20.5 L16.8 20.5 Z"/>
    <path d="M20.5 3.2 C21.5 2.4 25 2.4 25.3 3.5 C25.5 4.7 24 6 21.8 6.2 C20 6.3 19.6 4 20.5 3.2 Z"/>
  </g>
  <path d="M2.5 22.5 H23" stroke="#d4d4d4" stroke-width="1.5"/>
</svg>
</body></html>
